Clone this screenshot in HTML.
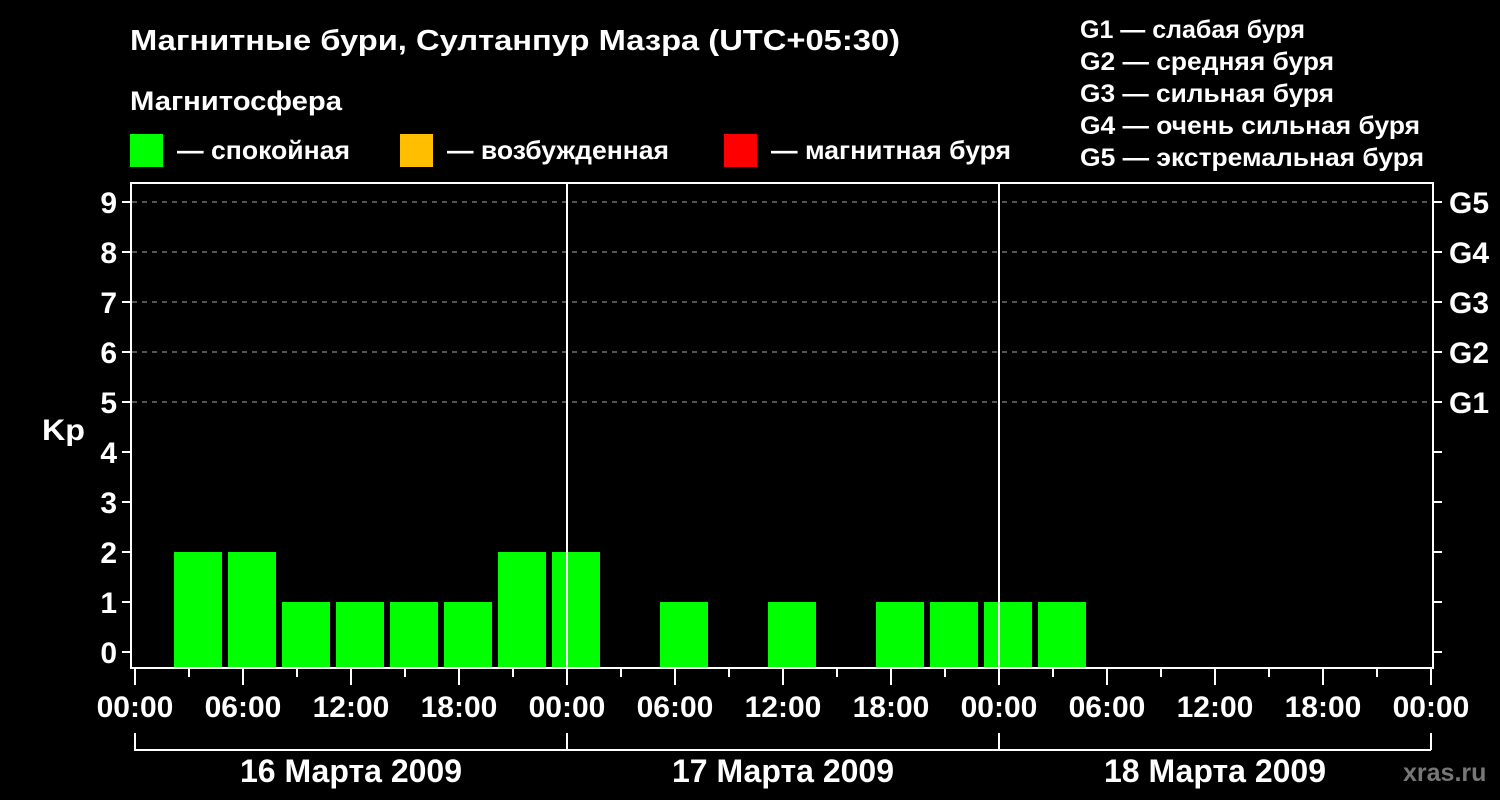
<!DOCTYPE html><html><head><meta charset="utf-8"><style>body{margin:0;background:#000}svg{display:block}text{font-family:"Liberation Sans",sans-serif;font-weight:bold;fill:#fff}</style></head><body>
<svg width="1500" height="800" viewBox="0 0 1500 800">
<rect width="1500" height="800" fill="#000"/>
<text x="130" y="50" font-size="29" textLength="770" lengthAdjust="spacingAndGlyphs">Магнитные бури, Султанпур Мазра (UTC+05:30)</text>
<text x="130" y="110" font-size="27" textLength="212" lengthAdjust="spacingAndGlyphs">Магнитосфера</text>
<rect x="130" y="134" width="33" height="33" fill="#00ff00"/><text x="177" y="159" font-size="26" textLength="173" lengthAdjust="spacingAndGlyphs">— спокойная</text>
<rect x="400" y="134" width="33" height="33" fill="#ffbf00"/><text x="447" y="159" font-size="26" textLength="222" lengthAdjust="spacingAndGlyphs">— возбужденная</text>
<rect x="724" y="134" width="33" height="33" fill="#ff0000"/><text x="771" y="159" font-size="26" textLength="240" lengthAdjust="spacingAndGlyphs">— магнитная буря</text>
<g font-size="25"><text x="1080" y="38">G1 — слабая буря</text><text x="1080" y="70" textLength="254" lengthAdjust="spacingAndGlyphs">G2 — средняя буря</text><text x="1080" y="102" textLength="254" lengthAdjust="spacingAndGlyphs">G3 — сильная буря</text><text x="1080" y="134" textLength="340" lengthAdjust="spacingAndGlyphs">G4 — очень сильная буря</text><text x="1080" y="166" textLength="344" lengthAdjust="spacingAndGlyphs">G5 — экстремальная буря</text></g>
<g stroke="#888" stroke-width="1.3" stroke-dasharray="5,5"><line x1="132" x2="1432" y1="202" y2="202"/><line x1="132" x2="1432" y1="252" y2="252"/><line x1="132" x2="1432" y1="302" y2="302"/><line x1="132" x2="1432" y1="352" y2="352"/><line x1="132" x2="1432" y1="402" y2="402"/></g>
<g fill="#00ff00">
<rect x="174" y="552" width="48" height="116"/><rect x="228" y="552" width="48" height="116"/><rect x="282" y="602" width="48" height="66"/><rect x="336" y="602" width="48" height="66"/><rect x="390" y="602" width="48" height="66"/><rect x="444" y="602" width="48" height="66"/><rect x="498" y="552" width="48" height="116"/><rect x="552" y="552" width="48" height="116"/><rect x="660" y="602" width="48" height="66"/><rect x="768" y="602" width="48" height="66"/><rect x="876" y="602" width="48" height="66"/><rect x="930" y="602" width="48" height="66"/><rect x="984" y="602" width="48" height="66"/><rect x="1038" y="602" width="48" height="66"/>
</g>
<g stroke="#fff" stroke-width="2" fill="none">
<rect x="131" y="183" width="1302" height="485"/>
<line x1="567" y1="183" x2="567" y2="668"/><line x1="999" y1="183" x2="999" y2="668"/>
<path d="M122 202h9M122 252h9M122 302h9M122 352h9M122 402h9M122 452h9M122 502h9M122 552h9M122 602h9M122 652h9"/>
<path d="M1433 202h9M1433 252h9M1433 302h9M1433 352h9M1433 402h9M1433 452h9M1433 502h9M1433 552h9M1433 602h9M1433 652h9"/>
<path d="M135 668v17M189 668v9M243 668v17M297 668v9M351 668v17M405 668v9M459 668v17M513 668v9M567 668v17M621 668v9M675 668v17M729 668v9M783 668v17M837 668v9M891 668v17M945 668v9M999 668v17M1053 668v9M1107 668v17M1161 668v9M1215 668v17M1269 668v9M1323 668v17M1377 668v9M1431 668v17"/>
<path d="M135 733v17H1431M567 733v17M999 733v17M1431 733v17"/>
</g>
<g font-size="30" text-anchor="end"><text x="117" y="213">9</text><text x="117" y="263">8</text><text x="117" y="313">7</text><text x="117" y="363">6</text><text x="117" y="413">5</text><text x="117" y="463">4</text><text x="117" y="513">3</text><text x="117" y="563">2</text><text x="117" y="613">1</text><text x="117" y="663">0</text></g>
<text x="42" y="440" font-size="30" textLength="43" lengthAdjust="spacingAndGlyphs">Kp</text>
<g font-size="30"><text x="1449" y="213">G5</text><text x="1449" y="263">G4</text><text x="1449" y="313">G3</text><text x="1449" y="363">G2</text><text x="1449" y="413">G1</text></g>
<g font-size="30" text-anchor="middle"><text x="135" y="717">00:00</text><text x="243" y="717">06:00</text><text x="351" y="717">12:00</text><text x="459" y="717">18:00</text><text x="567" y="717">00:00</text><text x="675" y="717">06:00</text><text x="783" y="717">12:00</text><text x="891" y="717">18:00</text><text x="999" y="717">00:00</text><text x="1107" y="717">06:00</text><text x="1215" y="717">12:00</text><text x="1323" y="717">18:00</text><text x="1431" y="717">00:00</text>
<text x="351" y="782" font-size="32">16 Марта 2009</text><text x="783" y="782" font-size="32">17 Марта 2009</text><text x="1215" y="782" font-size="32">18 Марта 2009</text></g>
<text x="1403" y="781" font-size="25" style="fill:#777">xras.ru</text>
</svg></body></html>
